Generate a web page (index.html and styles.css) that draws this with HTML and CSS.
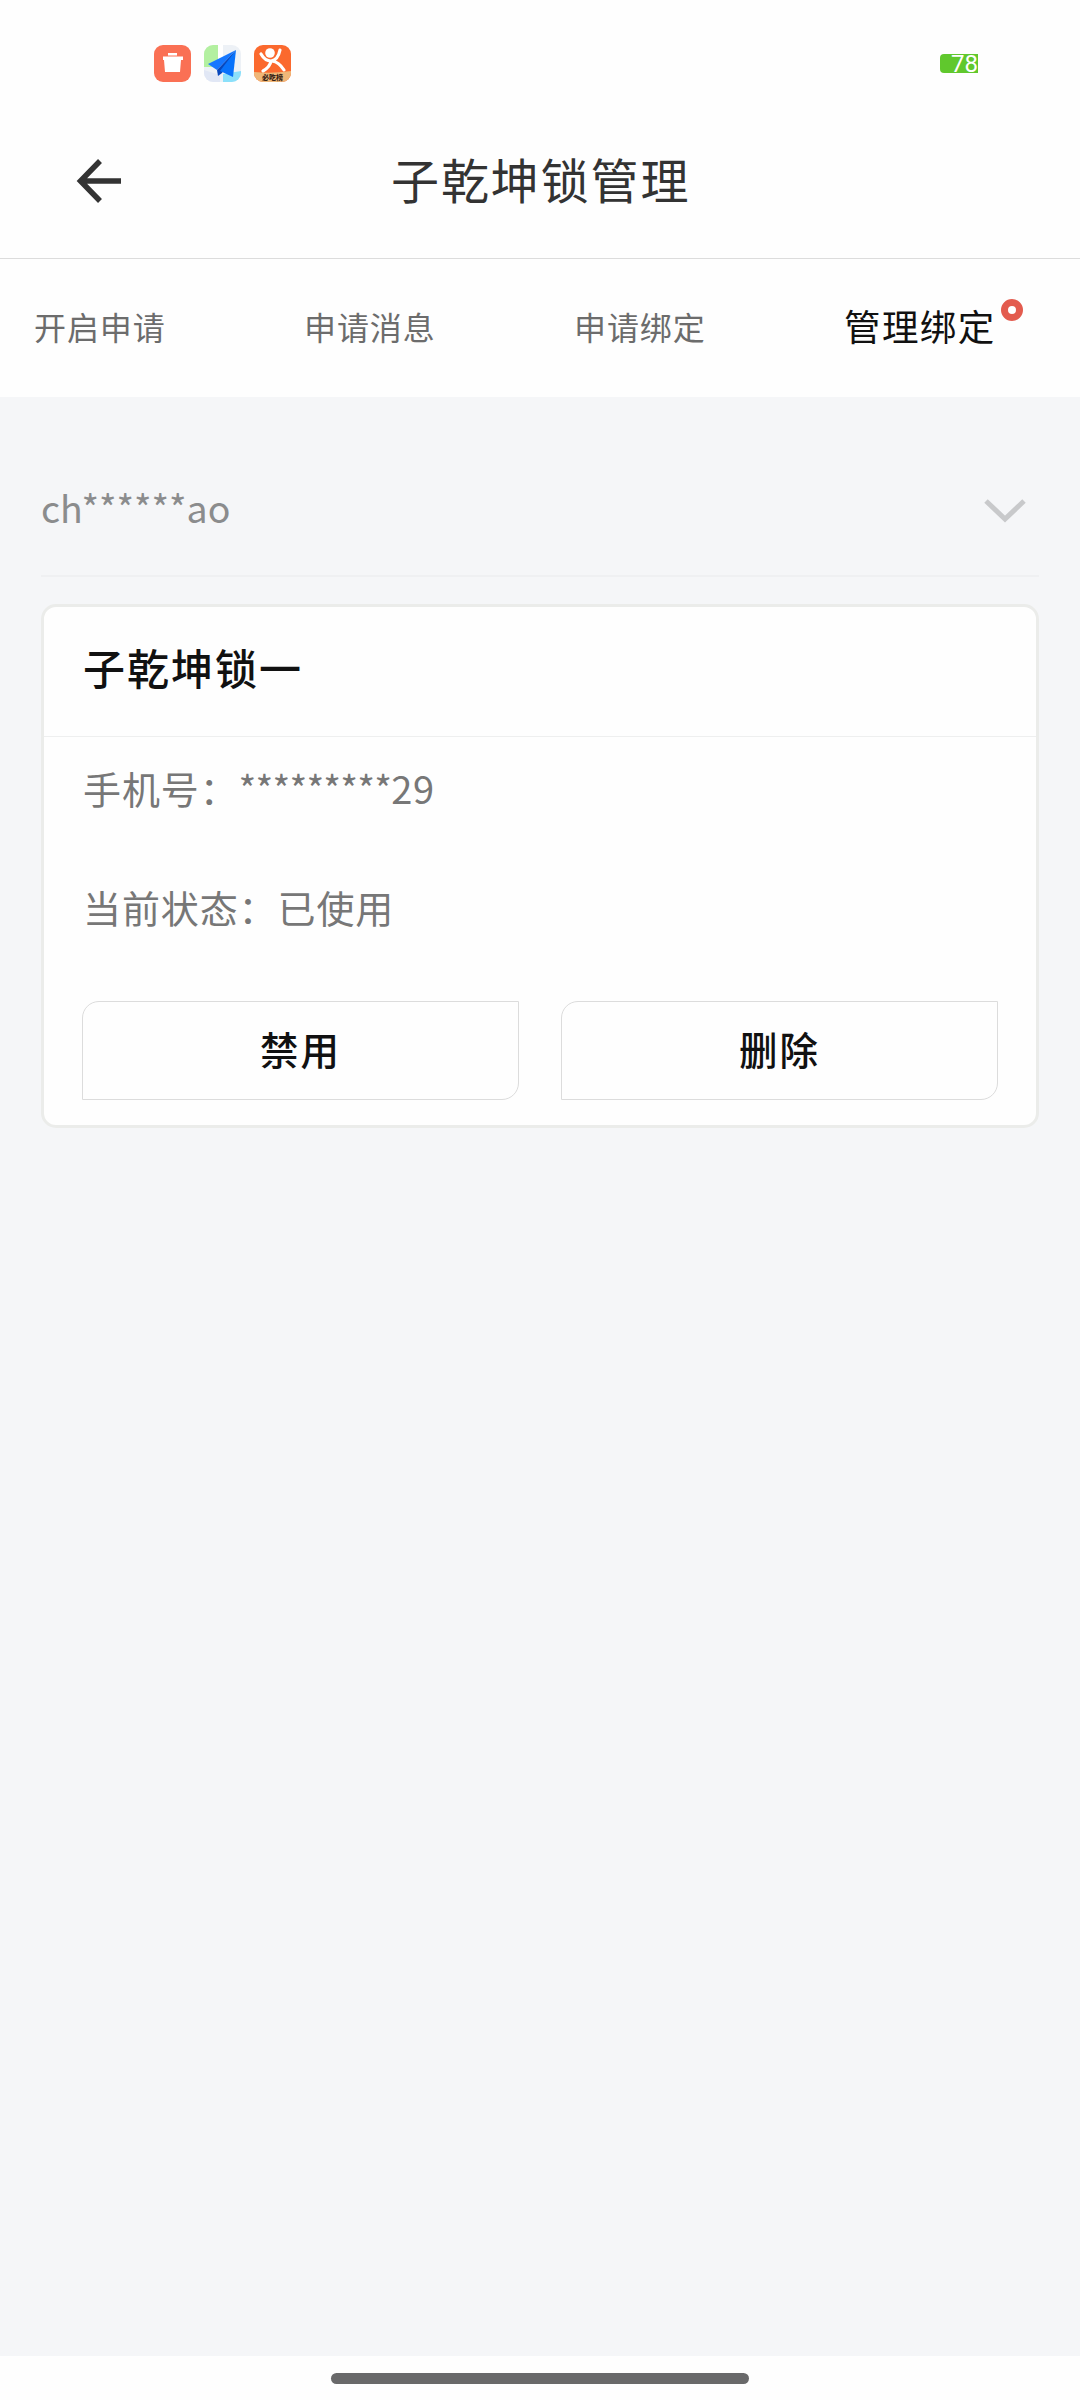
FILE: index.html
```html
<!DOCTYPE html>
<html lang="zh-CN">
<head>
<meta charset="utf-8">
<title>子乾坤锁管理</title>
<link rel="stylesheet" href="styles.css">
</head>
<body>
<div class="status">
  <div class="apps">
    <svg class="app" viewBox="0 0 37 37"><rect width="37" height="37" rx="9" fill="#fa7054"/><path d="M14 8h9v2.500h-9zM9 11.500h20v3.500h-2l-1 12h-15l-1-12h-1z" fill="#fff"/></svg>
    <svg class="app" viewBox="0 0 37 37"><clipPath id="tile"><rect width="37" height="37" rx="9"/></clipPath><g clip-path="url(#tile)"><rect width="37" height="37" fill="#edf1f6"/><path d="M0 0h14v22H0z" fill="#b3f0a0"/><path d="M14 0h5v22h-5z" fill="#fff"/><path d="M19 29l18-3v11H19z" fill="#8be0fa"/><path d="M0 25l16 5v7H0z" fill="#e1e7f5"/></g><path d="M32 5L4 19l9 6z" fill="#1677ff"/><path d="M32 5L13 25l1 6 4-3z" fill="#0747bd"/><path d="M32 5L16 26l13 6z" fill="#0872fb"/></svg>
    <svg class="app" viewBox="0 0 37 37"><clipPath id="badge"><rect width="37" height="37" rx="9"/></clipPath><g clip-path="url(#badge)"><rect width="37" height="37" fill="#fb692e"/><circle cx="16" cy="8" r="4.800" fill="#fff"/><path d="M7 9q4 7 10 7 7-1 9-11M17 16q-1 6-8 10M18 16q7 1 12 9" fill="none" stroke="#fff" stroke-width="3.200" stroke-linecap="round"/><path d="M0 27q18 2 37-1v11H0z" fill="#efb778"/><text x="18.500" y="34.500" text-anchor="middle" class="app-label">必吃榜</text></g></svg>
  </div>
  <div class="battery">78</div>
</div>
<header class="header">
  <svg class="back" viewBox="0 0 46 46"><path d="M45 23H5M24 3L4.500 23l19.500 20" fill="none" stroke="#333" stroke-width="5.500"/></svg>
  <h1 class="title">子乾坤锁管理</h1>
</header>
<nav class="tabs">
  <span class="tab">开启申请</span><span class="tab">申请消息</span><span class="tab">申请绑定</span><span class="tab active">管理绑定<i class="dot"></i></span>
</nav>
<main class="main">
  <div class="user"><span>ch******ao</span>
    <svg class="chevron" viewBox="0 0 42 26"><path d="M2 3l19 18L40 3" fill="none" stroke="#c8c9cb" stroke-width="5"/></svg>
  </div>
  <section class="card">
    <h2 class="card-title">子乾坤锁一</h2>
    <div class="row">手机号：<span class="phone">*********<span class="digits">29</span></span></div>
    <div class="row second">当前状态：已使用</div>
    <div class="actions"><button class="btn">禁用</button><button class="btn">删除</button></div>
  </section>
</main>
<footer class="footer"><div class="home"></div></footer>
</body>
</html>
```
FILE: styles.css
```css
* { box-sizing: border-box; }
body {
  margin: 0;
  width: 1080px;
  height: 2400px;
  display: flex;
  flex-direction: column;
  background: #fefefe;
  font-family: "Noto Sans CJK SC", sans-serif;
}
.status {
  height: 104px;
  padding: 45px 102px 0 154px;
  display: flex;
  justify-content: space-between;
}
.apps { display: flex; gap: 13px; }
.app { width: 37px; height: 37px; }
.app-label { font-size: 7px; font-weight: 900; fill: #392316; }
.battery {
  width: 38px;
  height: 19px;
  margin-top: 9px;
  border-radius: 4px 0 0 4px;
  background: #60c82d;
  color: #fff;
  font: 400 24px/21px Roboto, sans-serif;
  text-align: right;
}
.header {
  height: 155px;
  border-bottom: 1px solid #dcdcdc;
  padding-left: 76px;
  display: flex;
  align-items: center;
}
.back { width: 46px; height: 46px; }
.title {
  margin: 0 0 7px 269px;
  color: #333;
  font-size: 48px;
  font-weight: 400;
  line-height: 70px;
  letter-spacing: 1.9px;
}
.tabs {
  height: 138px;
  padding: 0 0 5px 34px;
  display: flex;
  align-items: center;
}
.tab { width: 270px; flex: none; font-size: 32px; letter-spacing: 0.9px; color: #6c6c6c; }
.tab.active { width: 212px; position: relative; font-size: 36.5px; letter-spacing: 1.4px; color: #111; }
.dot {
  position: absolute;
  left: 157px;
  top: 0;
  width: 22px;
  height: 22px;
  border: 7px solid #e35b4e;
  border-radius: 50%;
  background: #fff;
}
.main { height: 1959px; background: #f5f6f8; padding: 0 41px; }
.user {
  height: 180px;
  margin: 0 0 27px;
  padding: 41px 13px 0 0;
  display: flex;
  align-items: center;
  justify-content: space-between;
  border-bottom: 2px solid #eff0f2;
  color: #8b8c8d;
  font-size: 37.5px;
}
.chevron { width: 42px; height: 26px; margin-top: 9px; }
.card {
  height: 524px;
  border: 3px solid #ebecea;
  border-radius: 15px;
  background: #fefefe;
}
.card-title {
  height: 130px;
  margin: 0;
  padding-left: 39px;
  border-bottom: 1px solid #eeefef;
  color: #111;
  font-size: 42px;
  font-weight: 500;
  line-height: 120px;
  letter-spacing: 2px;
}
.row { height: 119px; padding-left: 39px; color: #777; font-size: 38px; line-height: 101px; letter-spacing: 0.9px; }
.phone { letter-spacing: -0.8px; }
.digits { letter-spacing: 0.8px; }
.second { height: 145px; }
.actions { display: flex; justify-content: space-between; padding: 0 38px; }
.btn {
  width: 437px;
  height: 99px;
  padding: 0 0 5px;
  border: 1px solid #dcdcdc;
  border-radius: 17px 0;
  background: #fefefe;
  color: #111;
  font: 500 38.5px/92px "Noto Sans CJK SC", sans-serif;
  letter-spacing: 2px;
}
.footer { height: 44px; padding-top: 17px; background: #fefefe; }
.home { width: 418px; height: 11px; margin: 0 auto; border-radius: 6px; background: #69696a; }
```
